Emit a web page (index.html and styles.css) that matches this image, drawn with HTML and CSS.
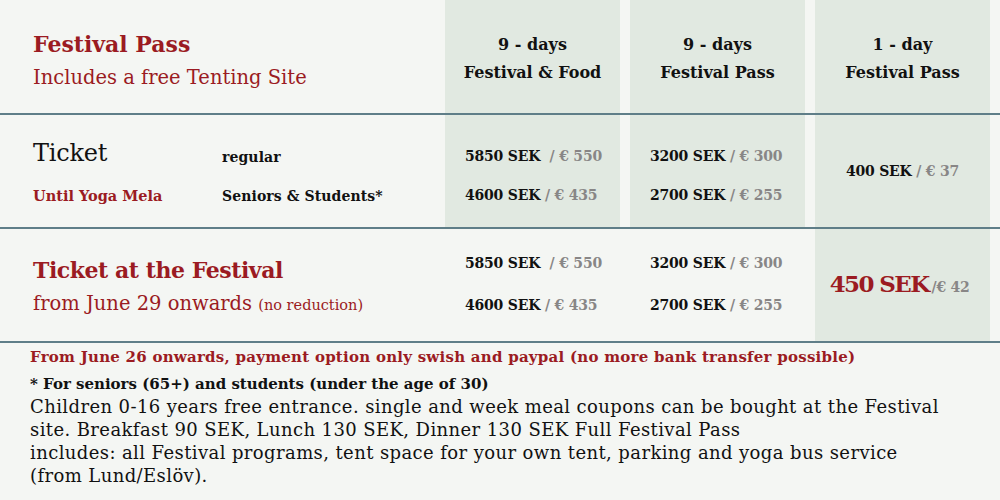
FILE: index.html
```html
<!DOCTYPE html>
<html>
<head>
<meta charset="utf-8">
<link rel="stylesheet" href="styles.css">
</head>
<body>
<div class="table">
  <div class="row head">
    <div class="label">
      <div class="title">Festival Pass</div>
      <div class="sub">Includes a free Tenting Site</div>
    </div>
    <div class="col shade"><div>9 - days</div><div>Festival &amp; Food</div></div>
    <div class="col shade"><div>9 - days</div><div>Festival Pass</div></div>
    <div class="col shade"><div>1 - day</div><div>Festival Pass</div></div>
  </div>
  <div class="row body early">
    <div class="label split">
      <div class="names">
        <div class="ticket">Ticket</div>
        <div class="until">Until Yoga Mela</div>
      </div>
      <div class="kinds">
        <div>regular</div>
        <div>Seniors &amp; Students*</div>
      </div>
    </div>
    <div class="col shade prices">
      <div class="price">5850 SEK <span class="eur">&nbsp;/ € 550</span></div>
      <div class="price">4600 SEK <span class="eur">/ € 435</span></div>
    </div>
    <div class="col shade prices">
      <div class="price">3200 SEK<span class="eur"> / € 300</span></div>
      <div class="price">2700 SEK<span class="eur"> / € 255</span></div>
    </div>
    <div class="col shade single">
      <div class="price">400 SEK<span class="eur"> / € 37</span></div>
    </div>
  </div>
  <div class="row body late">
    <div class="label">
      <div class="title">Ticket at the Festival</div>
      <div class="sub">from June 29 onwards <small>(no reduction)</small></div>
    </div>
    <div class="col prices">
      <div class="price">5850 SEK <span class="eur">&nbsp;/ € 550</span></div>
      <div class="price">4600 SEK <span class="eur">/ € 435</span></div>
    </div>
    <div class="col prices">
      <div class="price">3200 SEK<span class="eur"> / € 300</span></div>
      <div class="price">2700 SEK<span class="eur"> / € 255</span></div>
    </div>
    <div class="col shade single">
      <div class="big">450 SEK<span class="eur">/€ 42</span></div>
    </div>
  </div>
</div>
<div class="notes">
  <p class="warn">From June 26 onwards, payment option only swish and paypal (no more bank transfer possible)</p>
  <p class="star">* For seniors (65+) and students (under the age of 30)</p>
  <p class="info">Children 0-16 years free entrance. single and week meal coupons can be bought at the Festival<br>site. Breakfast 90 SEK, Lunch 130 SEK, Dinner 130 SEK Full Festival Pass<br>includes: all Festival programs, tent space for your own tent, parking and yoga bus service<br>(from Lund/Eslöv).</p>
</div>
</body>
</html>
```
FILE: styles.css
```css
html, body {
  margin: 0;
  padding: 0;
  background: #f4f6f3;
  font-family: "DejaVu Serif", "Liberation Serif", serif;
  color: #111;
}
.table {
  width: 1000px;
}
.row {
  display: grid;
  grid-template-columns: 435px 175px 175px 175px;
  column-gap: 10px;
  border-bottom: 2px solid #5f7e88;
}
.head { height: 113px; }
.body { height: 112px; }
.label {
  padding-left: 33px;
  display: flex;
  flex-direction: column;
  justify-content: flex-start;
}
.title {
  color: #9b1b22;
  font-weight: bold;
  font-size: 22px;
  line-height: 30px;
  letter-spacing: 0;
}
.late .title { letter-spacing: -0.45px; }
.sub {
  color: #9b1b22;
  font-size: 19.5px;
  line-height: 26px;
  margin-top: 6px;
}
.sub small { font-size: 14.5px; }
.head .label { padding-top: 29px; }
.late .label { padding-top: 26px; }
.col {
  display: flex;
  flex-direction: column;
  justify-content: flex-start;
}
.shade { background: #e1e9e1; }
.head .col {
  align-items: center;
  font-weight: bold;
  font-size: 16px;
  line-height: 28px;
  padding-top: 31px;
}
.split {
  flex-direction: row;
  align-items: stretch;
}
.names, .kinds {
  display: flex;
  flex-direction: column;
}
.names { width: 189px; padding-top: 21px; }
.ticket { font-size: 24px; height: 34px; line-height: 34px; margin-bottom: 16px; letter-spacing: -0.2px; }
.until { color: #9b1b22; font-weight: bold; font-size: 14.5px; line-height: 20px; }
.kinds { font-weight: bold; font-size: 14px; letter-spacing: 0.1px; line-height: 20px; padding-top: 32px; }
.kinds div:first-child { margin-bottom: 19px; }
.prices {
  padding-left: 20px;
  padding-top: 31px;
  gap: 18px;
}
.late .prices { padding-top: 24px; gap: 21px; }
.price {
  font-weight: bold;
  font-size: 14px;
  line-height: 21px;
  letter-spacing: -0.2px;
}
.eur { color: #888686; }
.single { align-items: center; justify-content: center; }
.big {
  color: #9b1b22;
  font-weight: bold;
  font-size: 23px;
  letter-spacing: -1.6px;
  line-height: 30px;
  margin-right: 6px;
}
.big .eur { font-size: 14px; letter-spacing: -0.3px; margin-left: 3px; }
.notes {
  padding: 4px 0 0 30px;
}
.notes p { margin: 0; }
.warn {
  color: #9b1b22;
  font-weight: bold;
  font-size: 15px;
  letter-spacing: 0.25px;
  line-height: 20px;
}
.star {
  font-weight: bold;
  font-size: 15px;
  line-height: 20px;
  margin-top: 7px !important;
}
.info {
  font-size: 18px;
  line-height: 23px;
  letter-spacing: 0.4px;
  margin-top: 1px !important;
}
```
